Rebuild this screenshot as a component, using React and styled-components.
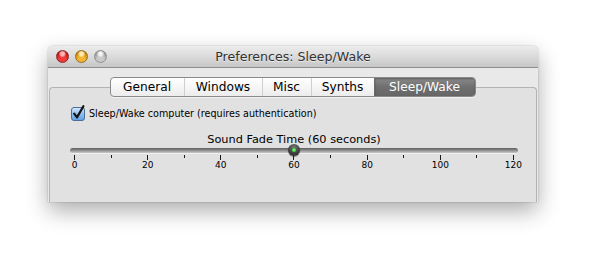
import React from "react";
import styled, { createGlobalStyle } from "styled-components";

const Global = createGlobalStyle`
  html, body { margin: 0; padding: 0; background: #ffffff; }
  body { font-family: "DejaVu Sans", "Liberation Sans", sans-serif; }
`;

const Page = styled.div`
  width: 592px;
  height: 256px;
  padding: 46px 0 0 48px;
  box-sizing: border-box;
`;

const Window = styled.div`
  width: 490px;
  height: 156px;
  display: flex;
  flex-direction: column;
  border-radius: 5px 5px 0 0;
  background: #e9e9e9;
  box-shadow: 0 9px 22px rgba(0, 0, 0, 0.32), 0 0 2px rgba(0, 0, 0, 0.25);
  overflow: hidden;
`;

const TitleBar = styled.div`
  height: 22px;
  flex: none;
  display: grid;
  grid-template-columns: 1fr auto 1fr;
  align-items: center;
  background: linear-gradient(#ececec, #d9d9d9 55%, #c6c6c6);
  border-bottom: 1px solid #8e8e8e;
  box-sizing: border-box;
`;

const Lights = styled.div`
  display: flex;
  gap: 6px;
  padding-left: 8px;
`;

const lightColors = {
  red: ["#ffb3b3", "#f03a3a", "#a50d0d", "#8b2a2a"],
  yellow: ["#ffeab0", "#f2b632", "#b87400", "#9a6d1d"],
  grey: ["#f4f4f4", "#c9c9c9", "#8c8c8c", "#8f8f8f"],
};

const Light = styled.span`
  width: 13px;
  height: 13px;
  border-radius: 50%;
  box-sizing: border-box;
  border: 1px solid ${(p) => lightColors[p.$c][3]};
  background: radial-gradient(circle at 50% 25%, ${(p) => lightColors[p.$c][0]} 0 18%, transparent 40%),
    radial-gradient(circle at 50% 85%, ${(p) => lightColors[p.$c][1]} 0 35%, ${(p) => lightColors[p.$c][2]} 85%);
`;

const Title = styled.div`
  font-size: 12.6px;
  color: #333333;
  text-shadow: 0 1px 0 rgba(255, 255, 255, 0.5);
  white-space: nowrap;
`;

const Content = styled.div`
  flex: 1;
  display: flex;
  flex-direction: column;
  padding-top: 9px;
  background: #e9e9e9;
`;

const Tabs = styled.div`
  align-self: center;
  display: flex;
  height: 20px;
  position: relative;
  z-index: 1;
  margin-left: -1px;
  border: 1px solid #8a8a8a;
  border-radius: 4px;
  box-sizing: border-box;
  background: linear-gradient(#ffffff, #f6f6f6 50%, #ececec);
  box-shadow: 0 1px 0 rgba(255, 255, 255, 0.6);
  overflow: hidden;
`;

const Tab = styled.div`
  width: ${(p) => p.$w}px;
  display: flex;
  align-items: center;
  justify-content: center;
  font-size: 12.2px;
  color: ${(p) => (p.$active ? "#ffffff" : "#000000")};
  background: ${(p) => (p.$active ? "linear-gradient(#8a8a8a, #6f6f6f 50%, #666666)" : "transparent")};
  box-shadow: ${(p) => (p.$active ? "inset 0 1px 2px rgba(0,0,0,0.35)" : "none")};
  border-left: ${(p) => (p.$first ? "none" : p.$active ? "1px solid #6a6a6a" : "1px solid #cfcfcf")};
  white-space: nowrap;
  padding-bottom: 1px;
  box-sizing: border-box;
`;

const Box = styled.div`
  flex: 1;
  margin: -10px 1px 0 1px;
  border: 1px solid #b3b3b3;
  border-bottom: none;
  border-radius: 4px 4px 0 0;
  background: #e1e1e1;
  padding: 17px 0 0 20px;
  display: flex;
  flex-direction: column;
`;

const CheckRow = styled.label`
  display: flex;
  align-items: center;
  gap: 3px;
  height: 16px;
  font-size: 9.6px;
  color: #000;
`;

const CheckBoxIcon = () => (
  <svg width="16" height="16" viewBox="0 0 16 16" style={{ overflow: "visible" }}>
    <defs>
      <linearGradient id="cbg" x1="0" y1="0" x2="0" y2="1">
        <stop offset="0" stopColor="#d7e9fb" />
        <stop offset="0.5" stopColor="#8fc0f0" />
        <stop offset="1" stopColor="#5d9fe4" />
      </linearGradient>
    </defs>
    <rect x="1.5" y="2.5" width="13" height="13" rx="2.5" fill="url(#cbg)" stroke="#4b6e9a" />
    <path d="M4.2 8.6 L7 12.4 L13.4 1.2" fill="none" stroke="#141414" strokeWidth="2.2" strokeLinecap="round" strokeLinejoin="round" />
  </svg>
);

const SliderLabel = styled.div`
  margin-top: 12px;
  width: 448px;
  text-align: center;
  font-size: 11.3px;
  line-height: 13px;
  color: #000;
  white-space: nowrap;
`;

const SliderArea = styled.div`
  width: 448px;
  margin-top: 2px;
  display: flex;
  flex-direction: column;
`;

const TrackWrap = styled.div`
  position: relative;
  height: 5px;
`;

const Track = styled.div`
  height: 5px;
  border-radius: 3px;
  background: linear-gradient(#5e5e5e, #8a8a8a 45%, #b5b5b5 80%, #c9c9c9);
  box-shadow: 0 1px 0 rgba(255, 255, 255, 0.5);
`;

const Thumb = styled.div`
  position: absolute;
  top: -4px;
  width: 12px;
  height: 12px;
  margin-left: -6px;
  border-radius: 50%;
  background: radial-gradient(circle at 50% 30%, #7a7a7a, #3a3a3a 60%, #202020);
  box-shadow: 0 1px 1px rgba(0, 0, 0, 0.4);
  display: flex;
  align-items: center;
  justify-content: center;
  &::after {
    content: "";
    width: 4px;
    height: 4px;
    border-radius: 50%;
    background: radial-gradient(circle, #7dff7d, #19c219);
  }
`;

const Ticks = styled.div`
  display: flex;
  justify-content: space-between;
  padding: 0 4px;
  margin-top: 2px;
  height: 5px;
`;

const Tick = styled.span`
  width: 1px;
  height: ${(p) => (p.$major ? 5 : 3)}px;
  background: #1a1a1a;
`;

const Labels = styled.div`
  display: flex;
  justify-content: space-between;
  padding: 0 4px;
  margin-top: 0px;
`;

const TickLabel = styled.span`
  width: 1px;
  display: flex;
  justify-content: center;
  font-size: 9px;
  line-height: 11px;
  color: #000;
  white-space: nowrap;
`;

const tabs = [
  { label: "General", w: 73 },
  { label: "Windows", w: 78 },
  { label: "Misc", w: 49 },
  { label: "Synths", w: 63 },
  { label: "Sleep/Wake", w: 101, active: true },
];

export default function App() {
  const value = 60;
  const max = 120;
  const ticks = Array.from({ length: 13 }, (_, i) => i * 10);
  const labels = [0, 20, 40, 60, 80, 100, 120];
  return (
    <>
      <Global />
      <Page>
        <Window>
          <TitleBar>
            <Lights>
              <Light $c="red" />
              <Light $c="yellow" />
              <Light $c="grey" />
            </Lights>
            <Title>Preferences: Sleep/Wake</Title>
            <span />
          </TitleBar>
          <Content>
            <Tabs>
              {tabs.map((t, i) => (
                <Tab key={t.label} $w={t.w} $active={t.active} $first={i === 0}>
                  {t.label}
                </Tab>
              ))}
            </Tabs>
            <Box>
              <CheckRow>
                <CheckBoxIcon />
                <span>Sleep/Wake computer (requires authentication)</span>
              </CheckRow>
              <SliderLabel>Sound Fade Time (60 seconds)</SliderLabel>
              <SliderArea>
                <TrackWrap>
                  <Track />
                  <Thumb style={{ left: `calc(4.5px + ${(value / max) * 439}px)` }} />
                </TrackWrap>
                <Ticks>
                  {ticks.map((t) => (
                    <Tick key={t} $major={t % 20 === 0} />
                  ))}
                </Ticks>
                <Labels>
                  {labels.map((l) => (
                    <TickLabel key={l}>{l}</TickLabel>
                  ))}
                </Labels>
              </SliderArea>
            </Box>
          </Content>
        </Window>
      </Page>
    </>
  );
}
